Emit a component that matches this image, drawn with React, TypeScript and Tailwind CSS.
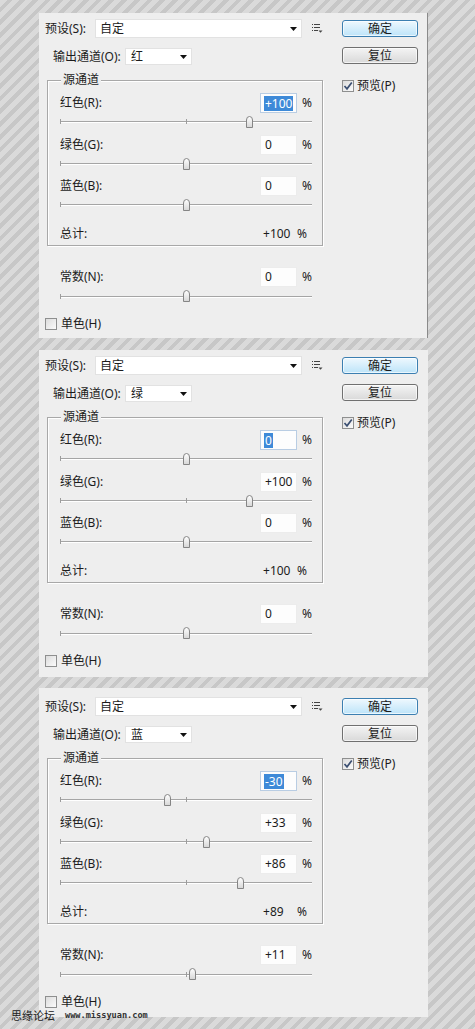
import React from 'react';

type PanelData = {
  out: string;
  vals: number[];
  total: string;
  konst: number;
  sel: string;
  boxClass: string;
  edge: boolean;
};

const panels: PanelData[] = [
  { out: '红', vals: [100, 0, 0], total: '+100', konst: 0, sel: '+100', boxClass: 'mt-[13px] h-[325px] pt-[6px]', edge: true },
  { out: '绿', vals: [0, 100, 0], total: '+100', konst: 0, sel: '0', boxClass: 'mt-[12px] h-[327px] pt-[6px]', edge: false },
  { out: '蓝', vals: [-30, 33, 86], total: '+89', konst: 11, sel: '-30', boxClass: 'mt-[11px] h-[329px] pt-[9px]', edge: false },
];

const channels = ['红色(R):', '绿色(G):', '蓝色(B):'];

const fmt = (v: number) => (v > 0 ? `+${v}` : String(v));

function Arrow() {
  return (
    <svg width="7" height="4" viewBox="0 0 7 4">
      <polygon points="0,0 7,0 3.5,4" fill="#111" />
    </svg>
  );
}

function MenuIcon() {
  return (
    <svg width="11" height="9" viewBox="0 0 11 9" fill="#444">
      <rect x="0" y="0" width="1" height="1" />
      <rect x="2" y="0" width="6" height="1" />
      <rect x="0" y="3" width="1" height="1" />
      <rect x="2" y="3" width="6" height="1" />
      <rect x="0" y="6" width="1" height="1" />
      <rect x="2" y="6" width="4" height="1" />
      <polygon points="6.5,6.5 10.5,6.5 8.5,8.8" />
    </svg>
  );
}

function Thumb() {
  return (
    <svg width="9" height="12" viewBox="0 0 9 12">
      <defs>
        <linearGradient id="tg" x1="0" y1="0" x2="0" y2="1">
          <stop offset="0" stopColor="#ffffff" />
          <stop offset="1" stopColor="#d6d6d6" />
        </linearGradient>
      </defs>
      <path d="M1.5 11.5 V4 Q1.5 0.5 4.5 0.5 Q7.5 0.5 7.5 4 V11.5 Z" fill="url(#tg)" stroke="#858585" />
    </svg>
  );
}

function CheckBox({ checked }: { checked: boolean }) {
  return (
    <div className="w-[12px] h-[12px] border border-[#8e8f8f] bg-gradient-to-br from-[#dcdcdc] to-[#fbfbfb] flex items-center justify-center">
      {checked && (
        <svg width="10" height="10" viewBox="0 0 10 10">
          <path d="M1.5 5 L4 7.8 L8.8 1.5" fill="none" stroke="#3b4f72" strokeWidth="1.7" />
        </svg>
      )}
    </div>
  );
}

function Track({ value, top }: { value: number; top: string }) {
  const pct = ((value + 200) / 400) * 100;
  return (
    <div className="relative h-[21.5px]">
      <div className={`absolute left-0 right-0 ${top} h-[2px] border-t border-[#a5a5a5] bg-white`} />
      <div className={`absolute left-0 ${top} -mt-[2px] w-px h-[5px] bg-[#9c9c9c]`} />
      <div className={`absolute left-1/2 ${top} -mt-[2px] w-px h-[5px] bg-[#9c9c9c]`} />
      <div className="absolute top-[3px] -ml-[4.5px] leading-none" style={{ left: `${pct}%` }}>
        <Thumb />
      </div>
    </div>
  );
}

function ValueRow({ label, value, selected }: { label: string; value: string; selected?: boolean }) {
  return (
    <div className="flex items-center justify-between h-[20px]">
      <span>{label}</span>
      <div className="flex items-center gap-[5px]">
        <div className={`w-[37px] h-[20px] bg-[#fdfdfd] border flex items-center pl-[3px] ${selected ? 'border-[#b9cde3]' : 'border-[#ececec]'}`}>
          {selected ? (
            <span className="bg-[#3e8ad8] text-white leading-[15px] px-px">{value}</span>
          ) : (
            <span className="px-px">{value}</span>
          )}
        </div>
        <span className="w-[10px]">%</span>
      </div>
    </div>
  );
}

function Panel({ p }: { p: PanelData }) {
  return (
    <div className={`w-[389px] ml-[39px] bg-[#eeeeee] flex ${p.boxClass} ${p.edge ? 'border-r border-[#8a8a8a]' : ''}`}>
      <div className="w-[284px] flex flex-col">
        <div className="flex items-center h-[19px] pl-[6px]">
          <span className="w-[50px]">预设(S):</span>
          <div className="w-[207px] h-[19px] bg-white border border-[#e2e2e2] flex items-center justify-between pl-[4px] pr-[4px]">
            <span>自定</span>
            <Arrow />
          </div>
          <div className="ml-[10px] flex items-center">
            <MenuIcon />
          </div>
        </div>
        <div className="flex items-center h-[17px] mt-[10px] pl-[14px]">
          <span className="w-[72px]">输出通道(O):</span>
          <div className="w-[67px] h-[17px] bg-white border border-[#e2e2e2] flex items-center justify-between pl-[5px] pr-[4px]">
            <span>{p.out}</span>
            <Arrow />
          </div>
        </div>
        <div className="relative mt-[15px] ml-[8px] w-[276px] h-[166px] border border-[#a8a8a8] shadow-[1px_1px_0_#ffffff,inset_1px_1px_0_#ffffff] pt-[12px] pl-[12px] pr-[10px]">
          <span className="absolute -top-[9px] left-[13px] px-[2px] bg-[#eeeeee] leading-[16px]">源通道</span>
          {channels.map((c, i) => (
            <div key={c}>
              <ValueRow label={c} value={i === 0 ? p.sel : fmt(p.vals[i])} selected={i === 0} />
              <Track value={p.vals[i]} top="top-[8px]" />
            </div>
          ))}
          <div className="flex items-center justify-between h-[20px] mt-[6px]">
            <span>总计:</span>
            <div className="flex items-center mr-[5px]">
              <span className="w-[34px]">{p.total}</span>
              <span>%</span>
            </div>
          </div>
        </div>
        <div className="mt-[21px] pl-[21px] pr-[11px]">
          <ValueRow label="常数(N):" value={fmt(p.konst)} />
          <Track value={p.konst} top="top-[9px]" />
        </div>
        <div className="flex items-center gap-[4px] h-[13px] mt-[9px] pl-[6px]">
          <CheckBox checked={false} />
          <span>单色(H)</span>
        </div>
      </div>
      <div className="ml-[19px] w-[76px] flex flex-col">
        <div className="mt-[1px] h-[17px] rounded-[3px] border border-[#3c7fb1] bg-gradient-to-b from-[#eef8fe] to-[#bde4f9] shadow-[inset_0_0_0_1px_#ffffffaa] flex items-center justify-center">
          确定
        </div>
        <div className="mt-[10px] h-[17px] rounded-[3px] border border-[#707070] bg-gradient-to-b from-[#f4f4f4] to-[#d9d9d9] shadow-[inset_0_0_0_1px_#ffffffaa] flex items-center justify-center">
          复位
        </div>
        <div className="mt-[15px] flex items-center gap-[3px] h-[13px]">
          <CheckBox checked />
          <span>预览(P)</span>
        </div>
      </div>
    </div>
  );
}

export default function App() {
  return (
    <div className="relative w-[475px] h-[1029px] overflow-hidden flex flex-col bg-[repeating-linear-gradient(135deg,#dadada_0px,#dadada_5px,#c7c7c7_5px,#c7c7c7_9px)] text-[12px] leading-none text-[#1c1c1c] font-[family-name:'Noto_Sans','Noto_Sans_CJK_SC',sans-serif]">
      {panels.map((p) => (
        <Panel key={p.out} p={p} />
      ))}
      <div className="absolute left-[11px] top-[1009px] flex items-center gap-[10px]">
        <span className="text-[11px] leading-[12px] text-[#222] font-[family-name:'Noto_Sans_CJK_SC',sans-serif]">思缘论坛</span>
        <span className="text-[8.6px] leading-[10px] font-bold text-[#333] font-[family-name:'DejaVu_Sans_Mono',monospace]">www.missyuan.com</span>
      </div>
    </div>
  );
}
